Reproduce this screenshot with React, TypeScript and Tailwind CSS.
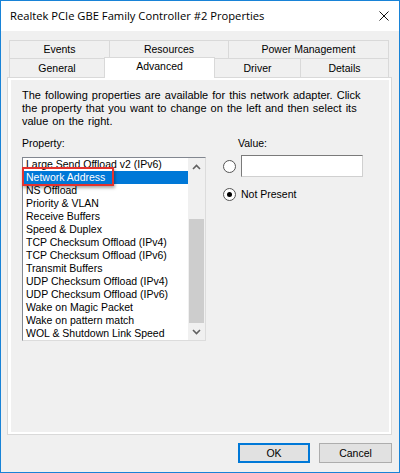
import React from "react";

const items = [
  "Large Send Offload v2 (IPv6)",
  "Network Address",
  "NS Offload",
  "Priority & VLAN",
  "Receive Buffers",
  "Speed & Duplex",
  "TCP Checksum Offload (IPv4)",
  "TCP Checksum Offload (IPv6)",
  "Transmit Buffers",
  "UDP Checksum Offload (IPv4)",
  "UDP Checksum Offload (IPv6)",
  "Wake on Magic Packet",
  "Wake on pattern match",
  "WOL & Shutdown Link Speed",
];

function Chevron({ up }: { up?: boolean }) {
  return (
    <svg width="9" height="6" viewBox="0 0 9 6">
      <polyline
        points={up ? "1,5 4.5,1.5 8,5" : "1,1 4.5,4.5 8,1"}
        fill="none"
        stroke="#606060"
        strokeWidth="1.6"
      />
    </svg>
  );
}

export default function App() {
  return (
    <div className="w-[400px] h-[473px] border border-[#1883d7] bg-[#f0f0f0] flex flex-col text-black font-['Liberation_Sans',Arial,sans-serif] text-[10.5px] leading-[13px]">
      {/* Title bar */}
      <div className="h-[30px] shrink-0 bg-white flex items-center justify-between pl-[9px] pr-[10px]">
        <span className="font-['Open_Sans',sans-serif] text-[11.2px] leading-[16px] text-black">
          Realtek PCIe GBE Family Controller #2 Properties
        </span>
        <svg width="10" height="10" viewBox="0 0 10 10">
          <line x1="0.5" y1="0.5" x2="9.5" y2="9.5" stroke="#111" strokeWidth="1" />
          <line x1="9.5" y1="0.5" x2="0.5" y2="9.5" stroke="#111" strokeWidth="1" />
        </svg>
      </div>

      {/* Tabs */}
      <div className="pt-[9px] pl-[8px] shrink-0">
        <div className="flex h-[18px]">
          <div className="w-[100px] border-t border-l border-[#d9d9d9] flex items-center justify-center">Events</div>
          <div className="w-[119px] border-t border-l border-[#d9d9d9] flex items-center justify-center">Resources</div>
          <div className="w-[161px] border-t border-l border-r border-[#d9d9d9] flex items-center justify-center">Power Management</div>
        </div>
        <div className="flex h-[19px] items-start">
          <div className="w-[95px] h-[19px] border-t border-l border-[#d9d9d9] flex items-center justify-center">General</div>
          <div className="relative z-10 w-[111px] h-[21px] -mt-[1px] bg-white border-t border-l border-r border-[#d9d9d9] flex items-center justify-center pb-[3px]">Advanced</div>
          <div className="w-[85px] h-[19px] border-t border-[#d9d9d9] flex items-center justify-center">Driver</div>
          <div className="w-[89px] h-[19px] border-t border-l border-r border-[#d9d9d9] flex items-center justify-center">Details</div>
        </div>
      </div>

      {/* Panel */}
      <div className="ml-[6px] w-[385px] h-[358px] shrink-0 border border-[#d9d9d9] bg-white pl-[3px] pt-[2px] pr-[2px] pb-[2px]">
        <div className="w-full h-full bg-[#f0f0f0] pl-[11px] pt-[9px]">
          <p className="text-[11px] [word-spacing:1px]">
            The following properties are available for this network adapter. Click
            <br />
            the property that you want to change on the left and then select its
            <br />
            value on the right.
          </p>
          <div className="flex mt-[9px]">
            {/* Left column */}
            <div className="flex flex-col">
              <div>Property:</div>
              <div className="relative mt-[7px] w-[184px] h-[184px] flex bg-white border border-t-[#828790] border-l-[#828790] border-r-[#dcdcdc] border-b-[#dcdcdc]">
                <div className="flex-1 flex flex-col">
                  {items.map((it, i) =>
                    i === 1 ? (
                      <div key={it} className="h-[13px] pl-[3px] whitespace-nowrap bg-[#0078d7] text-white">{it}</div>
                    ) : (
                      <div key={it} className="h-[13px] pl-[3px] whitespace-nowrap">{it}</div>
                    )
                  )}
                </div>
                <div className="w-[17px] flex flex-col bg-[#f0f0f0]">
                  <div className="h-[17px] flex items-center justify-center"><Chevron up /></div>
                  <div className="flex-1 flex flex-col px-[1px]">
                    <div className="h-[44px]" />
                    <div className="flex-1 bg-[#cdcdcd]" />
                  </div>
                  <div className="h-[17px] flex items-center justify-center"><Chevron /></div>
                </div>
                {/* red annotation */}
                <div className="absolute left-[-1px] top-[9px] w-[92px] h-[19px] border-[2.5px] border-[#e5322d] shadow-[1px_2px_3px_rgba(0,0,0,0.35)]" />
              </div>
            </div>

            {/* Right column */}
            <div className="ml-[17px] flex flex-col">
              <div className="ml-[15px]">Value:</div>
              <div className="mt-[5px] flex items-center">
                <div className="w-[13px] h-[13px] rounded-full border border-[#555] bg-white" />
                <div className="ml-[5px] w-[122px] h-[22px] bg-white border border-t-[#7a7a7a] border-l-[#7a7a7a] border-r-[#d0d0d0] border-b-[#d0d0d0]" />
              </div>
              <div className="mt-[11px] flex items-center">
                <div className="w-[13px] h-[13px] rounded-full border border-[#555] bg-white flex items-center justify-center">
                  <div className="w-[5px] h-[5px] rounded-full bg-black" />
                </div>
                <span className="ml-[5px]">Not Present</span>
              </div>
            </div>
          </div>
        </div>
      </div>

      {/* Buttons */}
      <div className="mt-[8px] flex justify-end gap-[9px] pr-[7px]">
        <div className="w-[72px] h-[20px] border-2 border-[#0078d7] bg-[#e1e1e1] flex items-center justify-center">OK</div>
        <div className="w-[73px] h-[20px] border border-[#adadad] bg-[#e1e1e1] flex items-center justify-center">Cancel</div>
      </div>
    </div>
  );
}
